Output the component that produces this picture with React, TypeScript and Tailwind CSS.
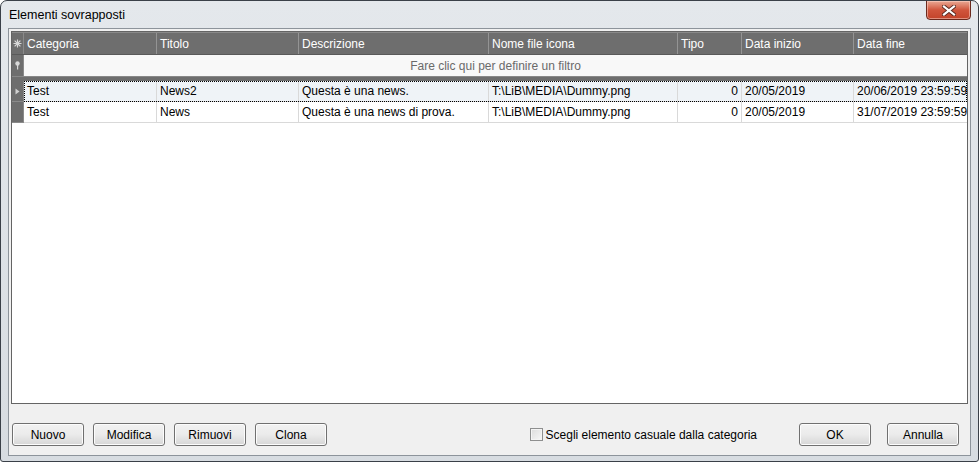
const cols = [
  { label: "Categoria", w: "w-[133px]" },
  { label: "Titolo", w: "w-[142px]" },
  { label: "Descrizione", w: "w-[190px]" },
  { label: "Nome file icona", w: "w-[189px]" },
  { label: "Tipo", w: "w-[64px]" },
  { label: "Data inizio", w: "w-[112px]" },
  { label: "Data fine", w: "w-[113px]" },
];

const rows = [
  ["Test", "News2", "Questa è una news.", "T:\\LiB\\MEDIA\\Dummy.png", "0", "20/05/2019", "20/06/2019 23:59:59"],
  ["Test", "News", "Questa è una news di prova.", "T:\\LiB\\MEDIA\\Dummy.png", "0", "20/05/2019", "31/07/2019 23:59:59"],
];

function WinButton({ label }: { label: string }) {
  return (
    <button className="h-[23px] w-[72px] rounded-[3px] border border-[#707070] bg-gradient-to-b from-[#f2f2f2] via-[#ebebeb] to-[#d6d6d6] text-[12px] text-black shadow-[inset_0_0_0_1px_#fcfcfc]">
      {label}
    </button>
  );
}

export default function App() {
  return (
    <div className="relative h-[462px] w-[979px] overflow-hidden rounded-t-[7px] rounded-b-[3px] border border-[#3a4048] bg-gradient-to-b from-[#e4e8ec] to-[#d7dce1] font-['Segoe_UI','Liberation_Sans',sans-serif] text-[12px] text-black">
      {/* title bar */}
      <div className="flex h-[27px] items-center pl-[8px] pt-[1px] text-[12.5px]">Elementi sovrapposti</div>

      {/* close button */}
      <div className="absolute right-[7px] top-[-1px] flex h-[20px] w-[45px] items-center justify-center rounded-b-[4px] border border-[#6b2a1e] bg-gradient-to-b from-[#e9a894] via-[#d0553c] to-[#c3432a] shadow-[inset_0_0_0_1px_rgba(255,220,210,0.5)]">
        <svg width="14" height="11" viewBox="0 0 14 11">
          <path d="M2 1.5 L12 9.5 M12 1.5 L2 9.5" stroke="#5a2a22" strokeWidth="4" strokeLinecap="square" />
          <path d="M2 1.5 L12 9.5 M12 1.5 L2 9.5" stroke="#ffffff" strokeWidth="2.2" strokeLinecap="square" />
        </svg>
      </div>

      {/* client area */}
      <div className="mx-[7px] flex h-[428px] flex-col border border-[#8d949b] bg-[#f0f0f0] p-[2px]">
        {/* grid */}
        <div className="flex h-[373px] flex-col border border-[#646464] bg-white">
          {/* header */}
          <div className="flex h-[23px] border-b border-t border-[#5a5a5a] border-t-[#8a8a8a] bg-[#6e6e6e] text-white">
            <div className="flex w-[12px] items-center justify-center border-r border-[#8a8a8a]">
              <svg width="9" height="9" viewBox="0 0 9 9">
                <path d="M4.5 0.5 V8.5 M0.5 4.5 H8.5 M1.6 1.6 L7.4 7.4 M7.4 1.6 L1.6 7.4" stroke="#d8d8d8" strokeWidth="1.2" />
              </svg>
            </div>
            {cols.map((c, i) => (
              <div
                key={c.label}
                className={`${c.w} flex items-center whitespace-nowrap pl-[3px] ${i < cols.length - 1 ? "border-r border-[#949494]" : ""}`}
              >
                {c.label}
              </div>
            ))}
          </div>

          {/* filter row */}
          <div className="flex h-[21px]">
            <div className="flex w-[12px] items-center justify-center border-r border-[#8a8a8a] bg-[#6e6e6e]">
              <svg width="7" height="9" viewBox="0 0 7 9">
                <circle cx="3.5" cy="2.5" r="2.2" fill="#d8d8d8" />
                <rect x="3" y="4" width="1.2" height="4.5" fill="#d8d8d8" />
              </svg>
            </div>
            <div className="flex flex-1 items-center justify-center whitespace-nowrap bg-[#f8f8f8] text-[#6a6a6a]">
              Fare clic qui per definire un filtro
            </div>
          </div>

          {/* separator band */}
          <div className="h-[5px] border-t border-[#888888] bg-[#6e6e6e]" />

          {/* data rows */}
          {rows.map((r, ri) => (
            <div key={ri} className="flex h-[21px]">
              <div className="flex w-[12px] items-center justify-center border-b border-r border-[#8a8a8a] bg-[#6e6e6e]">
                {ri === 0 && (
                  <svg width="5" height="7" viewBox="0 0 5 7">
                    <path d="M0.5 0.5 L4.5 3.5 L0.5 6.5 Z" fill="#d0d0d0" />
                  </svg>
                )}
              </div>
              <div
                className={`flex flex-1 ${ri === 0 ? "bg-[#eff3f7] outline-1 outline-offset-[-1px] outline-black outline-dotted" : "bg-white"}`}
              >
                {cols.map((c, ci) => (
                  <div
                    key={c.label}
                    className={`${c.w} flex items-center overflow-hidden whitespace-nowrap border-b border-[#d9d9d9] px-[3px] ${ci < cols.length - 1 ? "border-r" : ""} ${ci === 4 ? "justify-end" : ""}`}
                  >
                    {r[ci]}
                  </div>
                ))}
              </div>
            </div>
          ))}
          <div className="flex-1 bg-white" />
        </div>

        {/* bottom buttons */}
        <div className="mt-[19px] flex items-center pl-[1px] pr-[9px]">
          <div className="flex gap-[9px]">
            <WinButton label="Nuovo" />
            <WinButton label="Modifica" />
            <WinButton label="Rimuovi" />
            <WinButton label="Clona" />
          </div>
          <label className="ml-auto mr-[42px] flex items-center gap-[3px] whitespace-nowrap">
            <span className="h-[13px] w-[13px] border border-[#8e8f8f] bg-gradient-to-br from-[#dcdcdc] to-[#f7f7f7] shadow-[inset_0_0_0_1px_#f4f4f4]" />
            <span>Scegli elemento casuale dalla categoria</span>
          </label>
          <div className="flex gap-[16px]">
            <WinButton label="OK" />
            <WinButton label="Annulla" />
          </div>
        </div>
      </div>
    </div>
  );
}
